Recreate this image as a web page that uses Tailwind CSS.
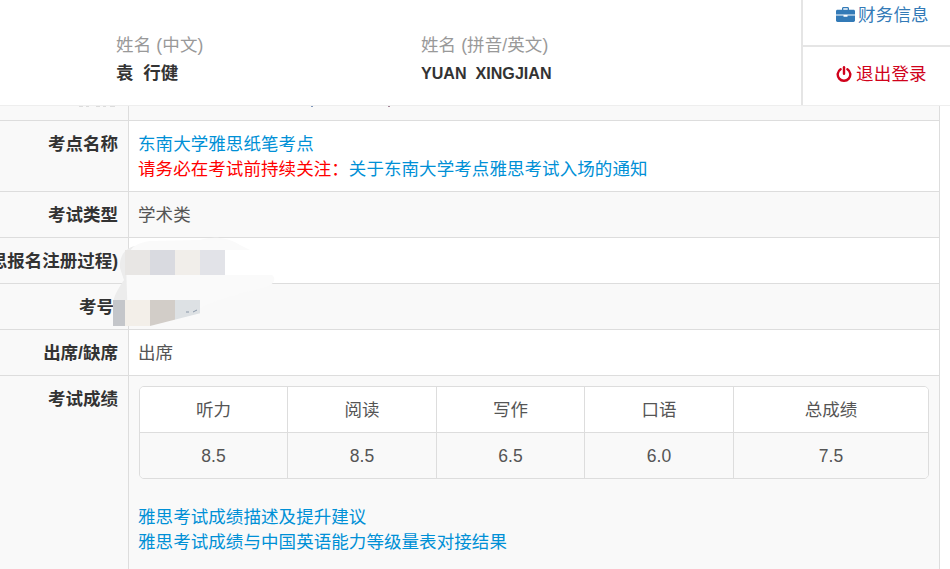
<!DOCTYPE html>
<html lang="zh">
<head>
<meta charset="utf-8">
<script src="https://cdn.jsdelivr.net/npm/@tailwindcss/browser@4"></script>
</head>
<body class="relative h-[569px] overflow-hidden bg-white font-['Liberation_Sans','Noto_Sans_CJK_SC',sans-serif] text-[17.5px] leading-[25px] text-[#555]">
<header class="flex h-[106px] border-b border-[#eeeeee] bg-white">
  <div class="flex w-[801px] pt-[33px]">
    <div class="ml-[116px] w-[305px]">
      <div class="tracking-[0.15px] text-[#999]">姓名 (中文)</div>
      <div class="mt-[3px] whitespace-pre font-bold text-[#333]">袁  行健</div>
    </div>
    <div>
      <div class="tracking-[0.1px] text-[#999]">姓名 (拼音/英文)</div>
      <div class="mt-[3px] whitespace-pre font-bold text-[16.1px] text-[#333]">YUAN  XINGJIAN</div>
    </div>
  </div>
  <div class="flex w-[149px] flex-col border-l-2 border-[#e5e5e5]">
    <a class="flex h-[47px] shrink-0 items-start border-b-2 border-[#e5e5e5] pl-[33px] pt-[3px] text-[#337ab7]">
      <svg class="mt-[4px] mr-[3px] h-[15px] w-[19px]" viewBox="0 0 19 16" preserveAspectRatio="none"><path fill="#337ab7" d="M6 3V1.500C6 .7 6.700 0 7.500 0h4C12.300 0 13 .7 13 1.500V3h4.500C18.300 3 19 3.700 19 4.500V8H0V4.500C0 3.700.7 3 1.500 3H6zm1.300 0h4.400V1.400H7.300V3zM0 9h7.500v1.500h4V9H19v5.500c0 .8-.7 1.500-1.500 1.500h-16C.7 16 0 15.300 0 14.500V9z"/></svg>
      <span class="tracking-[0.2px]">财务信息</span>
    </a>
    <a class="flex items-start pl-[33px] pt-[15px] text-[#d0021b]">
      <svg class="mt-[4px] mr-[4px] h-[16px] w-[16px]" viewBox="0 0 16 16" fill="none" stroke="#d0021b" stroke-width="2.400" stroke-linecap="round"><path d="M8 1.300v6.500"/><path d="M4.600 3.200a6.300 6.300 0 1 0 6.800 0"/></svg>
      <span class="tracking-[0.2px]">退出登录</span>
    </a>
  </div>
</header>

<main class="w-[940px] border-r border-[#dddddd]">
  <div class="flex h-[14px]">
    <div class="w-[129px] shrink-0 border-r border-[#dddddd] bg-[#f9f9f9]"></div>
    <div class="grow bg-[#f9f9f9]"></div>
  </div>
  <div class="flex border-t border-[#dddddd]">
    <div class="flex w-[129px] shrink-0 justify-end whitespace-nowrap border-r border-[#dddddd] bg-[#f9f9f9] pt-[11px] pb-[9px] pr-[10px] font-bold text-[#333]">考点名称</div>
    <div class="grow bg-white pl-[9px] pr-[10px] pt-[11px] pb-[9px] tracking-[0.07px]">
      <div class="text-[#0090d6]">东南大学雅思纸笔考点</div>
      <div><span class="text-[#ff0000]">请务必在考试前持续关注：</span><span class="text-[#0090d6]">关于东南大学考点雅思考试入场的通知</span></div>
    </div>
  </div>
  <div class="flex border-t border-[#dddddd]">
    <div class="flex w-[129px] shrink-0 justify-end whitespace-nowrap border-r border-[#dddddd] bg-[#f9f9f9] pt-[11px] pb-[9px] pr-[10px] font-bold text-[#333]">考试类型</div>
    <div class="grow bg-[#f9f9f9] pl-[9px] pr-[10px] pt-[11px] pb-[9px] tracking-[0.07px]">学术类</div>
  </div>
  <div class="flex border-t border-[#dddddd]">
    <div class="flex w-[129px] shrink-0 justify-end whitespace-nowrap border-r border-[#dddddd] bg-[#f9f9f9] pt-[11px] pb-[9px] pr-[10px] font-bold text-[#333]">雅思报名注册过程)</div>
    <div class="h-[45px] grow bg-white"></div>
  </div>
  <div class="flex border-t border-[#dddddd]">
    <div class="flex w-[129px] shrink-0 justify-end whitespace-nowrap border-r border-[#dddddd] bg-[#f9f9f9] pt-[11px] pb-[9px] pr-[14px] font-bold text-[#333]">考号</div>
    <div class="h-[45px] grow bg-[#f9f9f9]"></div>
  </div>
  <div class="flex border-t border-[#dddddd]">
    <div class="flex w-[129px] shrink-0 justify-end whitespace-nowrap border-r border-[#dddddd] bg-[#f9f9f9] pt-[11px] pb-[9px] pr-[10px] font-bold text-[#333]">出席/缺席</div>
    <div class="grow bg-white pl-[9px] pr-[10px] pt-[11px] pb-[9px] tracking-[0.07px]">出席</div>
  </div>
  <div class="flex h-[194px] border-t border-[#dddddd]">
    <div class="flex w-[129px] shrink-0 justify-end whitespace-nowrap border-r border-[#dddddd] bg-[#f9f9f9] pt-[11px] pb-[9px] pr-[10px] font-bold text-[#333]">考试成绩</div>
    <div class="grow bg-[#f9f9f9] px-[10px] py-[10px]">
      <div class="overflow-hidden rounded-[5px] border border-[#dddddd]">
        <div class="grid grid-cols-[148px_149px_148px_149px_1fr] bg-white text-center">
          <div class="border-r border-[#dddddd] pt-[11px] pb-[9px]">听力</div>
          <div class="border-r border-[#dddddd] pt-[11px] pb-[9px]">阅读</div>
          <div class="border-r border-[#dddddd] pt-[11px] pb-[9px]">写作</div>
          <div class="border-r border-[#dddddd] pt-[11px] pb-[9px]">口语</div>
          <div class="pt-[11px] pb-[9px]">总成绩</div>
        </div>
        <div class="grid grid-cols-[148px_149px_148px_149px_1fr] border-t border-[#dddddd] bg-[#f9f9f9] text-center">
          <div class="border-r border-[#dddddd] pt-[11px] pb-[9px]">8.5</div>
          <div class="border-r border-[#dddddd] pt-[11px] pb-[9px]">8.5</div>
          <div class="border-r border-[#dddddd] pt-[11px] pb-[9px]">6.5</div>
          <div class="border-r border-[#dddddd] pt-[11px] pb-[9px]">6.0</div>
          <div class="pt-[11px] pb-[9px]">7.5</div>
        </div>
      </div>
      <div class="ml-[-1px] mt-[26px] tracking-[0.07px] text-[#0090d6]">
        <div>雅思考试成绩描述及提升建议</div>
        <div>雅思考试成绩与中国英语能力等级量表对接结果</div>
      </div>
    </div>
  </div>
</main>

<svg class="absolute left-0 top-0 h-[569px] w-[950px]" viewBox="0 0 950 569">
  <defs>
    <clipPath id="low"><path d="M113 296H205V312L150 326H113z"/></clipPath>
  </defs>
  <path fill="#ececec" d="M120 268C119 255 126 248 135 246L140 290L135 325C122 326 114 318 113 305C113 295 121 285 124 280z"/>
  <path fill="#fafafa" d="M126 262C128 248 136 243 150 241L200 240C212 236 228 237 240 245L250 250V275H272C276 278 276 285 262 288C230 296 200 305 200 310L150 326L128 326z"/>
  <rect x="225" y="250" width="25" height="25" fill="#ffffff"/>
  <g>
    <rect x="125" y="250" width="25" height="25" fill="#e8e6e4"/>
    <rect x="150" y="250" width="25" height="25" fill="#d9dae0"/>
    <rect x="175" y="250" width="25" height="25" fill="#f1eeea"/>
    <rect x="200" y="250" width="25" height="25" fill="#e2e3e8"/>
  </g>
  <g clip-path="url(#low)">
    <rect x="100" y="300" width="25" height="30" fill="#c4c6ca"/>
    <rect x="125" y="300" width="25" height="30" fill="#f3efe9"/>
    <rect x="150" y="300" width="25" height="30" fill="#d2cdc8"/>
    <rect x="175" y="300" width="25" height="30" fill="#dde1e4"/>
  </g>
  <path d="M186 312h3M193 312l4-2" stroke="#8a97a8" stroke-width="1" fill="none"/>
  <g fill="#dcdcdc">
    <rect x="79" y="106" width="4" height="1"/><rect x="86" y="106" width="3" height="1"/><rect x="96" y="106" width="4" height="1"/><rect x="103" y="106" width="3" height="1"/><rect x="110" y="106" width="5" height="1"/>
  </g>
  <rect x="311" y="106" width="2" height="1" fill="#7f97bb"/>
  <rect x="388" y="106" width="2" height="1" fill="#a58899"/>
</svg>
</body>
</html>
